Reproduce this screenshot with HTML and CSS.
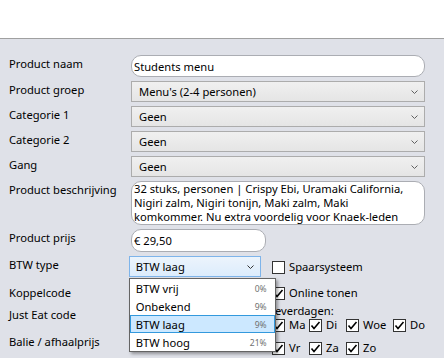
FILE: index.html
```html
<!DOCTYPE html>
<html lang="nl">
  <head>
    <meta charset="UTF-8" />
    <meta name="viewport" content="width=device-width, initial-scale=1.0" />
    <title>Product bewerken</title>
    <link rel="stylesheet" href="styles.css">
  </head>
  <body>
    <div class="titlebar"></div>
    <main class="panel">
      <div class="form-grid">
        <label for="naam">Product naam</label>
        <input class="text-input" id="naam" type="text" value="Students menu" />

        <label>Product groep</label>
        <div class="select">
          <span>Menu's (2-4 personen)</span>
          <svg class="chevron" width="7" height="4" viewBox="0 0 7 4"><polyline points="0.5,0.5 3.5,3.5 6.5,0.5" /></svg>
        </div>

        <label>Categorie 1</label>
        <div class="select">
          <span>Geen</span>
          <svg class="chevron" width="7" height="4" viewBox="0 0 7 4"><polyline points="0.5,0.5 3.5,3.5 6.5,0.5" /></svg>
        </div>

        <label>Categorie 2</label>
        <div class="select">
          <span>Geen</span>
          <svg class="chevron" width="7" height="4" viewBox="0 0 7 4"><polyline points="0.5,0.5 3.5,3.5 6.5,0.5" /></svg>
        </div>

        <label>Gang</label>
        <div class="select">
          <span>Geen</span>
          <svg class="chevron" width="7" height="4" viewBox="0 0 7 4"><polyline points="0.5,0.5 3.5,3.5 6.5,0.5" /></svg>
        </div>

        <label for="beschrijving">Product beschrijving</label>
        <textarea class="text-area" id="beschrijving">32 stuks, personen | Crispy Ebi, Uramaki California, Nigiri zalm, Nigiri tonijn, Maki zalm, Maki komkommer. Nu extra voordelig voor Knaek-leden</textarea>

        <label for="prijs">Product prijs</label>
        <input class="text-input short" id="prijs" type="text" value="€ 29,50" />
      </div>

      <div class="lower">
        <div class="lower-labels">
          <label>BTW type</label>
          <label>Koppelcode</label>
          <label>Just Eat code</label>
          <label>Balie / afhaalprijs</label>
        </div>

        <div class="btw">
          <div class="select focused">
            <span>BTW laag</span>
            <svg class="chevron" width="7" height="4" viewBox="0 0 7 4"><polyline points="0.5,0.5 3.5,3.5 6.5,0.5" /></svg>
          </div>
          <ul class="dropdown">
            <li><span>BTW vrij</span><small>0%</small></li>
            <li><span>Onbekend</span><small>9%</small></li>
            <li class="active"><span>BTW laag</span><small>9%</small></li>
            <li><span>BTW hoog</span><small>21%</small></li>
          </ul>
        </div>

        <div class="options">
          <label class="check spaar"><span class="box"></span>Spaarsysteem</label>
          <label class="check online"><span class="box"><svg viewBox="0 0 11 11"><path d="M1.5 5.5 L4 8.5 L9.5 2" /></svg></span>Online tonen</label>
          <div class="days-title">Leverdagen:</div>
          <div class="days">
            <label class="check"><span class="box"><svg viewBox="0 0 11 11"><path d="M1.5 5.5 L4 8.5 L9.5 2" /></svg></span>Ma</label>
            <label class="check"><span class="box"><svg viewBox="0 0 11 11"><path d="M1.5 5.5 L4 8.5 L9.5 2" /></svg></span>Di</label>
            <label class="check"><span class="box"><svg viewBox="0 0 11 11"><path d="M1.5 5.5 L4 8.5 L9.5 2" /></svg></span>Woe</label>
            <label class="check"><span class="box"><svg viewBox="0 0 11 11"><path d="M1.5 5.5 L4 8.5 L9.5 2" /></svg></span>Do</label>
            <label class="check"><span class="box"><svg viewBox="0 0 11 11"><path d="M1.5 5.5 L4 8.5 L9.5 2" /></svg></span>Vr</label>
            <label class="check"><span class="box"><svg viewBox="0 0 11 11"><path d="M1.5 5.5 L4 8.5 L9.5 2" /></svg></span>Za</label>
            <label class="check"><span class="box"><svg viewBox="0 0 11 11"><path d="M1.5 5.5 L4 8.5 L9.5 2" /></svg></span>Zo</label>
          </div>
        </div>
      </div>
    </main>
  </body>
</html>
```

FILE: styles.css
```css
* {
  box-sizing: border-box;
}
body {
  margin: 0;
  height: 358px;
  overflow: hidden;
  font-family: "Noto Sans", sans-serif;
  font-size: 11.2px;
  color: #000;
  background-color: #dfe1e8;
}
.titlebar {
  height: 39px;
  background-color: white;
  border-bottom: 1px solid #a0a0a0;
}
.panel {
  padding: 16px 19px 0 9px;
}
.form-grid {
  display: grid;
  grid-template-columns: 122px 294px;
  row-gap: 4px;
}
.form-grid > label,
.lower-labels label {
  line-height: 18px;
}
.text-input {
  height: 22px;
  padding: 0 2px;
  border: 1px solid #abadb3;
  border-radius: 10px;
  background-color: white;
  font: inherit;
  color: #000;
}
.text-input.short {
  width: 135px;
  height: 23px;
}
.text-area {
  height: 44px;
  padding: 0 9px 0 2px;
  border: 1px solid #abadb3;
  border-radius: 10px;
  background-color: white;
  font: inherit;
  line-height: 14px;
  resize: none;
  overflow: hidden;
}
.select {
  height: 21px;
  display: flex;
  align-items: center;
  justify-content: space-between;
  padding: 0 6px 0 7px;
  border: 1px solid #acacac;
  background: linear-gradient(#f0f0f0, #e5e5e5);
}
.chevron {
  fill: none;
  stroke: #606060;
  stroke-width: 1;
}
.select.focused {
  border-color: #7eb4ea;
  background: linear-gradient(#ecf4fc, #dcecfc);
  padding-left: 6px;
}
.select.focused .chevron {
  stroke: #333;
}

/* lower block: btw + options */
.lower {
  display: flex;
  margin-top: 4px;
}
.lower-labels {
  width: 122px;
  display: grid;
  grid-template-rows: 28px 22px 27px 18px;
}
.btw {
  position: relative;
  width: 135px;
}
.dropdown {
  position: absolute;
  top: 22px;
  left: 0;
  width: 147px;
  margin: 0;
  padding: 0;
  list-style: none;
  background-color: white;
  border: 1px solid #646464;
  box-shadow: 2px 2px 3px rgba(0, 0, 0, 0.35);
  z-index: 2;
}
.dropdown li {
  height: 18px;
  display: flex;
  align-items: center;
  justify-content: space-between;
  padding: 0 7px 0 5px;
  border: 1px solid transparent;
}
.dropdown li small {
  font-size: 8.5px;
  color: #707070;
}
.dropdown li.active {
  background-color: #cce8ff;
  border-color: #3399dd;
}
.options {
  margin-left: 11px;
  display: flex;
  flex-direction: column;
}
.check {
  display: flex;
  align-items: center;
  gap: 4px;
  line-height: 18px;
}
.check.spaar {
  padding-top: 2px;
}
.check.online {
  margin-top: 8px;
}
.box {
  width: 13px;
  height: 13px;
  border: 1px solid #333;
  background-color: white;
  flex-shrink: 0;
  display: flex;
}
.box svg {
  width: 11px;
  height: 11px;
  fill: none;
  stroke: #000;
  stroke-width: 1.6;
}
.days-title {
  margin: 3px 0 0 -3px;
  height: 11px;
  line-height: 11px;
}
.days {
  margin-top: 2px;
  display: grid;
  grid-template-columns: 37px 37px 47px auto;
  row-gap: 9px;
}
.days .check {
  line-height: 14px;
}
```
